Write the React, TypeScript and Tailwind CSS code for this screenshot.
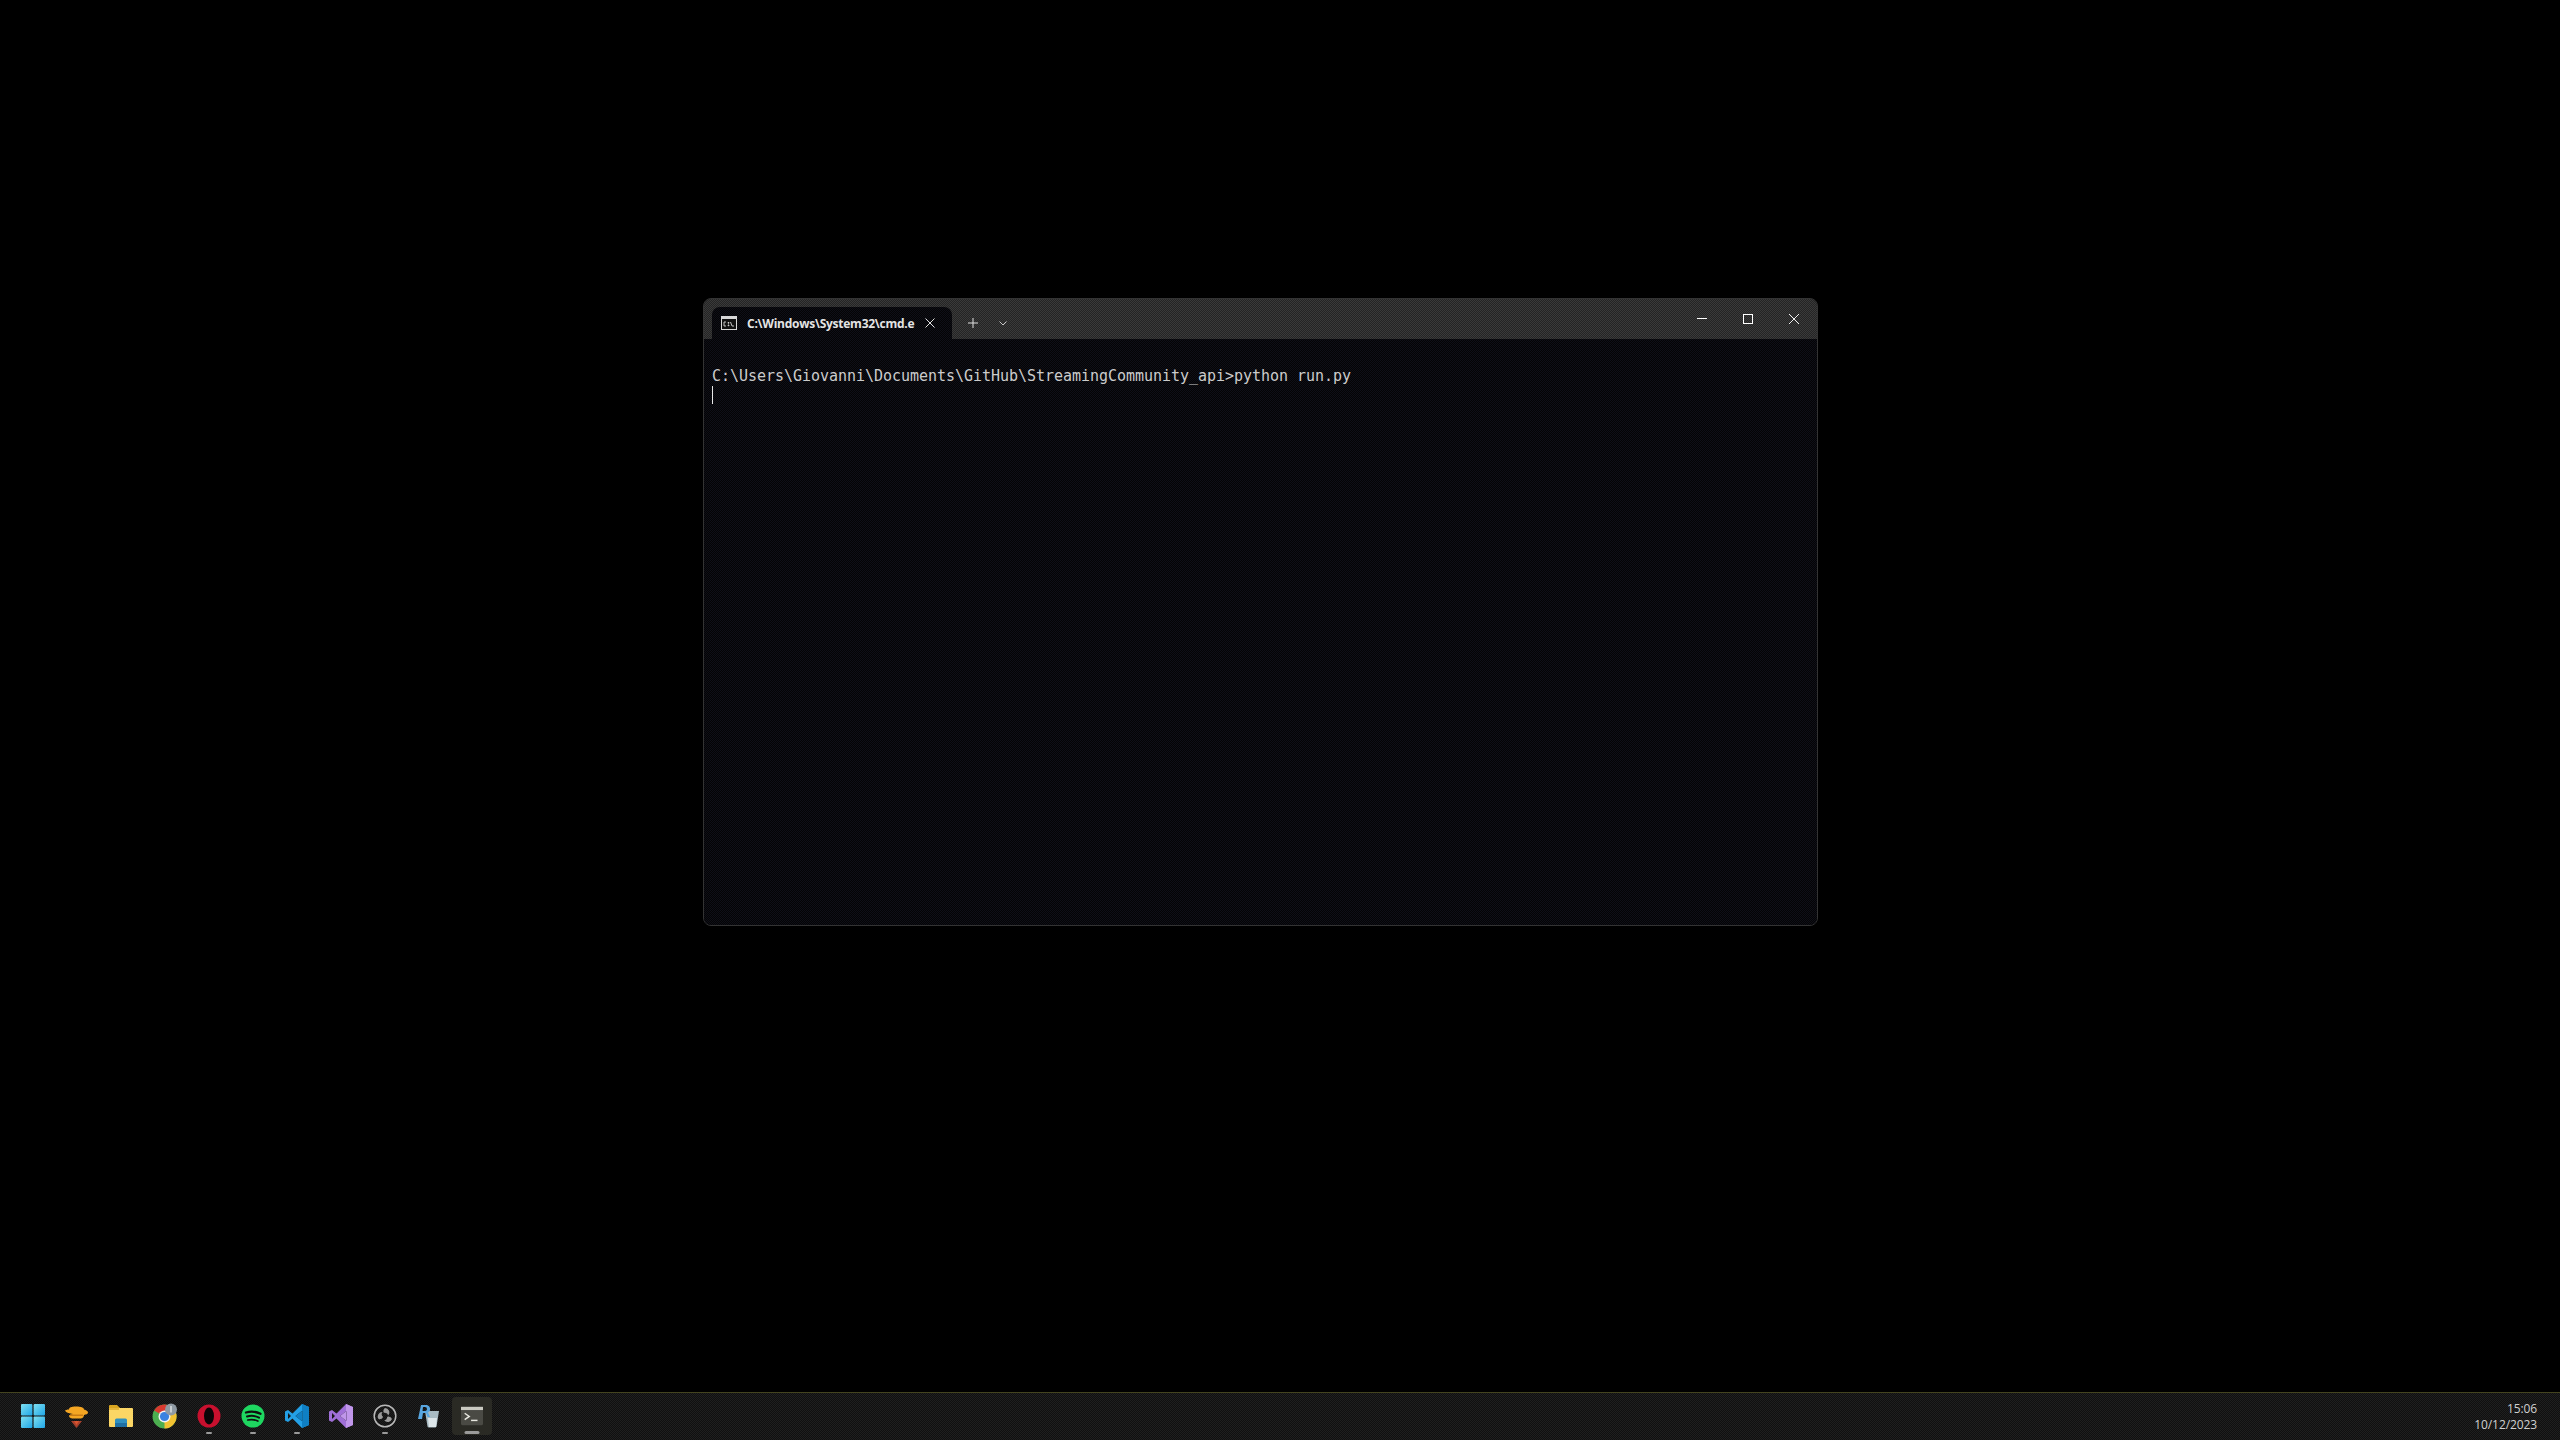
import React from "react";

const StartIcon = () => (
  <svg width="24" height="24" viewBox="0 0 24 24">
    <defs>
      <linearGradient id="st" x1="0" y1="0" x2="1" y2="1">
        <stop offset="0" stopColor="#7fe0f0" />
        <stop offset="1" stopColor="#1fa6e8" />
      </linearGradient>
    </defs>
    <rect x="0" y="0" width="11.4" height="11.4" rx="1" fill="url(#st)" />
    <rect x="12.6" y="0" width="11.4" height="11.4" rx="1" fill="url(#st)" />
    <rect x="0" y="12.6" width="11.4" height="11.4" rx="1" fill="url(#st)" />
    <rect x="12.6" y="12.6" width="11.4" height="11.4" rx="1" fill="url(#st)" />
  </svg>
);

const PinIcon = () => (
  <svg className="-ml-[2px]" width="24" height="24" viewBox="0 0 24 24">
    <path d="M1 7c0-1 2-1.500 4-1.500 0-2 2-3 7-3s8 1 8 3c2 .5 4 1.500 4 3s-2 2-4 2.500c0 1.500-1 3-3 3.500H8c-2-.5-3-1.500-3-3 1-1 3-1 4-1.500-3-.5-7-1-8-3.500z" fill="#f5a623" />
    <path d="M6 10.500h13v1.500H6z" fill="#c97a12" />
    <path d="M7 17h11l-5.500 7z" fill="#a8412c" />
    <path d="M10 17h5l-2.500 4z" fill="#d9542f" />
  </svg>
);

const FolderIcon = () => (
  <svg width="24" height="24" viewBox="0 0 24 24">
    <path d="M0 2a1 1 0 0 1 1-1h7l3 3h-11z" fill="#d9a520" />
    <rect x="0" y="4" width="24" height="19" rx="1" fill="#fbd665" />
    <rect x="0" y="4" width="10" height="2" fill="#e5b53a" />
    <path d="M6 21v-5a1.500 1.500 0 0 1 1.500-1.500h9a1.500 1.500 0 0 1 1.500 1.500v5z" fill="#2f8fbf" />
    <rect x="6" y="19" width="12" height="4" fill="#1f6fa3" />
  </svg>
);

const ChromeIcon = () => (
  <svg width="26" height="26" viewBox="0 0 26 26">
    <circle cx="12.500" cy="13.500" r="12" fill="#4caf50" />
    <path d="M12.500 13.500 2.100 7.500A12 12 0 0 1 22.900 7.500z" fill="#d93a30" />
    <path d="M12.500 13.500 22.900 7.500A12 12 0 0 1 12.500 25.500z" fill="#f2c232" />
    <circle cx="12.500" cy="13.500" r="6" fill="#f3f3f3" />
    <circle cx="12.500" cy="13.500" r="4.600" fill="#3b82e0" />
    <circle cx="19" cy="6.500" r="6" fill="#8f9aa3" />
    <rect x="18" y="3" width="2" height="6.500" fill="#c8ced2" />
  </svg>
);

const OperaIcon = () => (
  <svg width="24" height="24" viewBox="0 0 24 24">
    <circle cx="12" cy="12" r="11.500" fill="#c8102e" />
    <ellipse cx="12" cy="12" rx="5" ry="8.500" fill="#0a0508" />
  </svg>
);

const SpotifyIcon = () => (
  <svg width="24" height="24" viewBox="0 0 24 24">
    <circle cx="12" cy="12" r="11.500" fill="#1ed760" />
    <path d="M5 8.500c5-1.500 10-1 14.500 1.300" stroke="#101010" strokeWidth="2.300" fill="none" strokeLinecap="round" />
    <path d="M6 12.500c4-1.100 8.500-.7 12 1.200" stroke="#101010" strokeWidth="2" fill="none" strokeLinecap="round" />
    <path d="M6.800 16c3.500-.8 7-.5 10 1" stroke="#101010" strokeWidth="1.700" fill="none" strokeLinecap="round" />
  </svg>
);

const VSCodeIcon = () => (
  <svg width="24" height="24" viewBox="0 0 24 24">
    <path d="M17 0 7.500 9.500 3 6 0 7.500v9L3 18l4.500-3.500L17 24l7-3V3zM17.500 6.500v11L10.500 12zM3 9l3 3-3 3z" fill="#23a0e6" fillRule="evenodd" />
    <path d="M17 0 24 3v18l-7 3z M17.500 6.500v11L10.500 12z" fill="#0f7fc4" fillRule="evenodd" />
  </svg>
);

const VSIcon = () => (
  <svg width="24" height="24" viewBox="0 0 24 24">
    <path d="M17 0 7.500 9.500 3 6 0 7.500v9L3 18l4.500-3.500L17 24l7-3V3zM17.500 7v10L11 12zM3 9l3 3-3 3z" fill="#a06fd8" fillRule="evenodd" />
    <path d="M17 0 24 3v18l-7 3z M17.500 7v10L11 12z" fill="#c096ea" fillRule="evenodd" />
  </svg>
);

const ObsIcon = () => (
  <svg width="24" height="24" viewBox="0 0 24 24" fill="none">
    <circle cx="12" cy="12" r="10.800" stroke="#b8b8b8" strokeWidth="1.500" />
    <path d="M12 4a4.500 4.500 0 0 1 3.300 7.500 3.800 3.800 0 0 0-4.500-2.700A4 4 0 0 1 12 4z" fill="#9c9c9c" />
    <path d="M19 15a4.500 4.500 0 0 1-7.800 1.300 3.800 3.800 0 0 0 3-3.600A4 4 0 0 1 19 15z" fill="#9c9c9c" />
    <path d="M5.500 15a4.500 4.500 0 0 1 4-7 3.800 3.800 0 0 0 .6 5 4 4 0 0 1-4.600 2z" fill="#9c9c9c" />
  </svg>
);

const RecycleIcon = () => (
  <svg width="24" height="24" viewBox="0 0 24 24">
    <path d="M8 7h14l-2.500 15.500a1.500 1.500 0 0 1-1.500 1H12a1.500 1.500 0 0 1-1.500-1z" fill="#a9bcc4" />
    <path d="M11 14h9l-1 9h-7z" fill="#dde6ea" />
    <path d="M1 15 4 1h6a4 4 0 0 1 1 7.500L13 13h-2.500L9 9H6l-1 6zM6 3 5.500 7H8a2 2 0 0 0 0-4z" fill="#58a6e0" fillRule="evenodd" />
  </svg>
);

const TerminalIcon = () => (
  <svg width="22" height="22" viewBox="0 0 24 24">
    <rect x="0" y="2" width="24" height="20" rx="1.500" fill="#4a4a44" />
    <rect x="0" y="2" width="24" height="3.500" fill="#c9c9c0" />
    <path d="m4 9 5 3.500-5 3.500" stroke="#e8e8e0" strokeWidth="1.600" fill="none" />
    <rect x="11" y="16" width="7" height="1.600" fill="#e8e8e0" />
  </svg>
);

const CmdIcon = () => (
  <svg width="16" height="14" viewBox="0 0 16 14">
    <rect x="0" y="0" width="16" height="14" fill="#d8d8d8" />
    <rect x="1" y="3" width="14" height="10" fill="#111" />
    <path d="M5 6H3v4h2M7 6.500h1v.7H7zM7 9h1v.7H7zM9.500 6 11 10h2" stroke="#d8d8d8" strokeWidth="0.900" fill="none" />
  </svg>
);

const apps: { icon: React.ReactNode; dot?: boolean }[] = [
  { icon: <StartIcon /> },
  { icon: <PinIcon /> },
  { icon: <FolderIcon /> },
  { icon: <ChromeIcon /> },
  { icon: <OperaIcon />, dot: true },
  { icon: <SpotifyIcon />, dot: true },
  { icon: <VSCodeIcon />, dot: true },
  { icon: <VSIcon /> },
  { icon: <ObsIcon />, dot: true },
  { icon: <RecycleIcon /> },
];

export default function App() {
  return (
    <div className="relative flex h-[1440px] w-[2560px] flex-col overflow-hidden bg-black">
      <div className="flex-1" />

      <div className="absolute left-[703px] top-[298px] flex h-[628px] w-[1115px] flex-col overflow-hidden rounded-lg border border-[#333333] bg-[#0a0a0c]">
        <div className="flex h-[40px] shrink-0 items-end bg-[#2e2e2e] bg-[image:repeating-conic-gradient(#3a3a3a_0_25%,#242424_0_50%)] bg-[length:2px_2px] pl-2">
          <div className="flex h-[32px] w-[240px] items-center rounded-t-lg bg-[#0a0a0c] bg-[image:repeating-conic-gradient(#0f0f18_0_25%,#040404_0_50%)] bg-[length:2px_2px] pl-[9px]">
            <CmdIcon />
            <span className="relative top-[1px] ml-[10px] w-[164px] whitespace-nowrap font-['Open_Sans',sans-serif] text-[12px] font-bold tracking-[-0.25px] text-[#e4e4e4]">
              C:\Windows\System32\cmd.e
            </span>
            <svg className="ml-[14px]" width="10" height="10" viewBox="0 0 10 10">
              <path d="m.5.5 9 9m0-9-9 9" stroke="#e0e0e0" strokeWidth="1" />
            </svg>
          </div>
          <div className="mb-[11px] ml-[16px] flex items-center">
            <svg width="10" height="10" viewBox="0 0 10 10">
              <path d="M5 0v10M0 5h10" stroke="#e0e0e0" strokeWidth="1" />
            </svg>
            <svg className="ml-[21px]" width="8" height="5" viewBox="0 0 8 5">
              <path d="m.5.5 3.500 3.500L7.500.5" stroke="#c8c8c8" strokeWidth="1" fill="none" />
            </svg>
          </div>
          <div className="ml-auto mr-[18px] flex h-full items-start gap-[36px] pt-[15px]">
            <div className="mt-[4px] h-px w-[10px] bg-white" />
            <div className="h-[10px] w-[10px] border border-white" />
            <svg width="10" height="10" viewBox="0 0 10 10">
              <path d="m0 0 10 10m0-10L0 10" stroke="#f0f0f0" strokeWidth="1" />
            </svg>
          </div>
        </div>

        <div className="flex-1 bg-[image:repeating-conic-gradient(#0f0f18_0_25%,#040404_0_50%)] bg-[length:2px_2px] pl-2 pt-[28px] font-['DejaVu_Sans_Mono',monospace] text-[15px] leading-[19px] tracking-[-0.03px] text-[#cccccc]">
          <div>C:\Users\Giovanni\Documents\GitHub\StreamingCommunity_api&gt;python run.py</div>
          <div className="h-[18px] w-px bg-[#e8e8e8]" />
        </div>
      </div>

      <div className="flex h-[48px] shrink-0 items-center border-t border-[#44441f] bg-[#181818] bg-[image:repeating-conic-gradient(#1f1f1f_0_25%,#101010_0_50%)] bg-[length:2px_2px] pb-[1px] pl-[11px] pr-[23px]">
        {apps.map((a, i) => (
          <div key={i} className="relative flex h-[46px] w-[44px] items-center justify-center">
            {a.icon}
            {a.dot && <div className="absolute bottom-[5px] left-1/2 h-[2px] w-[6px] -translate-x-1/2 rounded-full bg-[#9a9a9a]" />}
          </div>
        ))}
        <div className="relative ml-[1px] flex h-[38px] w-[40px] items-center justify-center rounded bg-[#2a2a24]">
          <TerminalIcon />
          <div className="absolute bottom-[1px] left-1/2 h-[3px] w-[15px] -translate-x-1/2 rounded-full bg-[#9a9a9a]" />
        </div>
        <div className="ml-auto flex flex-col items-end pt-[1px] font-['Open_Sans',sans-serif] text-[12px] leading-[16px] tracking-[-0.1px] text-[#d0d0d0]">
          <span>15:06</span>
          <span>10/12/2023</span>
        </div>
      </div>
    </div>
  );
}
